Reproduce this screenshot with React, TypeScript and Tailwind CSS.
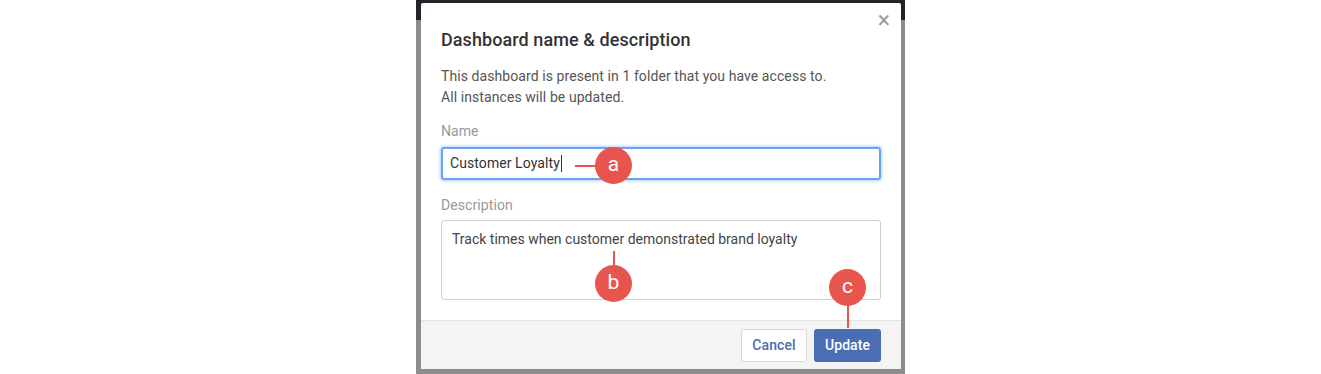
import React from 'react';

function Marker({ letter }: { letter: string }) {
  return (
    <div className="flex h-[37px] w-[37px] items-center justify-center rounded-full bg-[#e8554e] text-[21px] leading-none text-white">
      <span className="-mt-[2px]">{letter}</span>
    </div>
  );
}

export default function App() {
  return (
    <div className="flex h-[374px] w-full justify-center bg-white" style={{ fontFamily: 'Roboto, "Liberation Sans", sans-serif' }}>
      {/* dimmed app behind the dialog */}
      <div className="relative h-[374px] w-[489px] bg-[linear-gradient(#212428_0_20px,#8c8c8c_20px)] pl-[5px] pt-[3px]">
        <div className="relative flex h-[366px] w-[480px] flex-col rounded-[2px] bg-white tracking-[0.08px]">
          <button className="absolute right-[11px] top-[6px] text-[23px] leading-none text-[#9a9a9a]">×</button>
          <div className="flex-1 px-5 pt-[25px]">
            <h2 className="text-[18px] font-medium leading-6 text-[#333]">Dashboard name &amp; description</h2>
            <p className="mt-[14px] text-[14px] leading-[21px] text-[#555]">
              This dashboard is present in 1 folder that you have access to.
              <br />
              All instances will be updated.
            </p>
            <label className="mt-[13px] block text-[14px] leading-5 text-[#999]">Name</label>
            <div className="relative mt-[6px] flex h-[33px] items-center rounded-[3px] border-2 border-[#6aa2f2] px-[7px] text-[14px] text-[#333] shadow-[0_0_3px_1px_rgba(90,150,240,0.45)]">
              Customer Loyalty<span className="ml-[1px] inline-block h-[17px] w-px bg-[#333]" />
              {/* callout a */}
              <div className="absolute left-[132px] top-[-2px] flex items-center">
                <div className="h-[2px] w-[24px] bg-[#e8554e]" />
                <div className="-ml-[4px]">
                  <Marker letter="a" />
                </div>
              </div>
            </div>
            <label className="mt-[15px] block text-[14px] leading-5 text-[#999]">Description</label>
            <div className="relative mt-[5px] h-[80px] rounded-[3px] border border-[#cfcfcf] px-[10px] pt-[8px] text-[14px] leading-5 tracking-normal text-[#444]">
              Track times when customer demonstrated brand loyalty
              {/* callout b */}
              <div className="absolute left-[153px] top-[30px] flex flex-col items-center">
                <div className="h-[16px] w-[2px] bg-[#e8554e]" />
                <div className="-mt-[2px]">
                  <Marker letter="b" />
                </div>
              </div>
            </div>
          </div>
          <div className="relative flex h-[49px] items-center justify-end gap-[7px] border-t border-[#e3e3e3] bg-[#f4f4f4] px-5">
            <button className="h-[33px] w-[66px] rounded-[3px] border border-[#d6d6d6] bg-white text-[14px] font-medium text-[#4a6db3]">
              Cancel
            </button>
            <button className="h-[33px] w-[67px] rounded-[3px] bg-[#4a6db3] text-[14px] font-medium text-white">
              Update
            </button>
            {/* callout c */}
            <div className="absolute right-[35px] top-[-52px] flex flex-col items-center">
              <Marker letter="c" />
              <div className="-mt-[2px] h-[24px] w-[2px] bg-[#e8554e]" />
            </div>
          </div>
        </div>
      </div>
    </div>
  );
}
